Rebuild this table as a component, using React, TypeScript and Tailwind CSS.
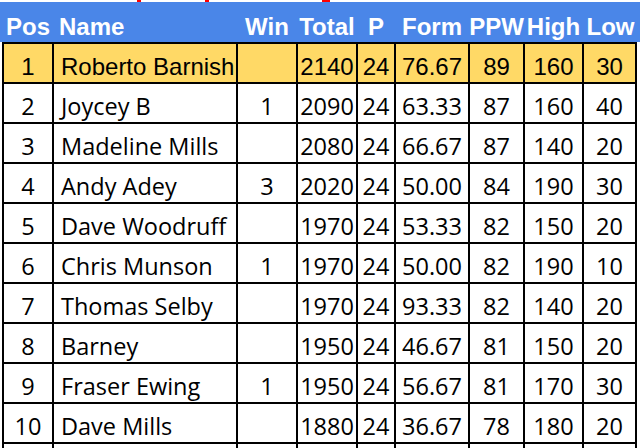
import React from "react";

const rows: string[][] = [
  ["1", "Roberto Barnish", "", "2140", "24", "76.67", "89", "160", "30"],
  ["2", "Joycey B", "1", "2090", "24", "63.33", "87", "160", "40"],
  ["3", "Madeline Mills", "", "2080", "24", "66.67", "87", "140", "20"],
  ["4", "Andy Adey", "3", "2020", "24", "50.00", "84", "190", "30"],
  ["5", "Dave Woodruff", "", "1970", "24", "53.33", "82", "150", "20"],
  ["6", "Chris Munson", "1", "1970", "24", "50.00", "82", "190", "10"],
  ["7", "Thomas Selby", "", "1970", "24", "93.33", "82", "140", "20"],
  ["8", "Barney", "", "1950", "24", "46.67", "81", "150", "20"],
  ["9", "Fraser Ewing", "1", "1950", "24", "56.67", "81", "170", "30"],
  ["10", "Dave Mills", "", "1880", "24", "36.67", "78", "180", "20"],
  ["", "", "", "", "", "", "", "", ""],
];

const widths = ["w-[50px]", "w-[184px]", "w-[60px]", "w-[60px]", "w-[38px]", "w-[74px]", "w-[55px]", "w-[59px]", "w-[55px]"];
const headers = ["Pos", "Name", "Win", "Total", "P", "Form", "PPW", "High", "Low"];

export default function App() {
  return (
    <div className="w-[640px] h-[448px] overflow-hidden bg-white relative">
      <div className="h-[2px] relative">
        <div className="absolute left-[137px] top-0 w-[4px] h-[2px] bg-[#ff0000]" />
        <div className="absolute left-[205px] top-0 w-[4px] h-[2px] bg-[#ff0000]" />
        <div className="absolute left-[322px] top-0 w-[8px] h-[2px] bg-[#ff0000]" />
      </div>
      <div className="h-[40px] bg-[#4a86e8] flex pl-[2px] text-white font-bold text-[24px] leading-none" style={{ fontFamily: '"Liberation Sans", Arial, sans-serif' }}>
        {headers.map((h, i) => (
          <div key={h} className={`${widths[i]} shrink-0 flex items-end pb-[3px] whitespace-nowrap ${i === 1 ? "justify-start pl-[7px]" : "justify-center pl-[2px]"}`}>
            {h}
          </div>
        ))}
      </div>
      {rows.map((r, ri) => (
        <div
          key={ri}
          className={`h-[40px] flex ml-[2px] w-[635px] border-t-2 border-black leading-none text-black ${ri === 0 ? "bg-[#ffd966] text-[24px]" : "bg-white text-[23.5px]"}`}
          style={{ fontFamily: ri === 0 ? '"Liberation Sans", Arial, sans-serif' : '"Open Sans", sans-serif' }}
        >
          {r.map((c, ci) => (
            <div
              key={ci}
              className={`${widths[ci]} shrink-0 border-l-2 border-black flex items-end ${ri === 0 ? "pb-[3px]" : "pb-[4px]"} whitespace-nowrap ${ci === 1 ? "justify-start pl-[7px]" : "justify-center"} ${ci === 8 ? "border-r-2" : ""}`}
            >
              {c}
            </div>
          ))}
        </div>
      ))}
    </div>
  );
}
